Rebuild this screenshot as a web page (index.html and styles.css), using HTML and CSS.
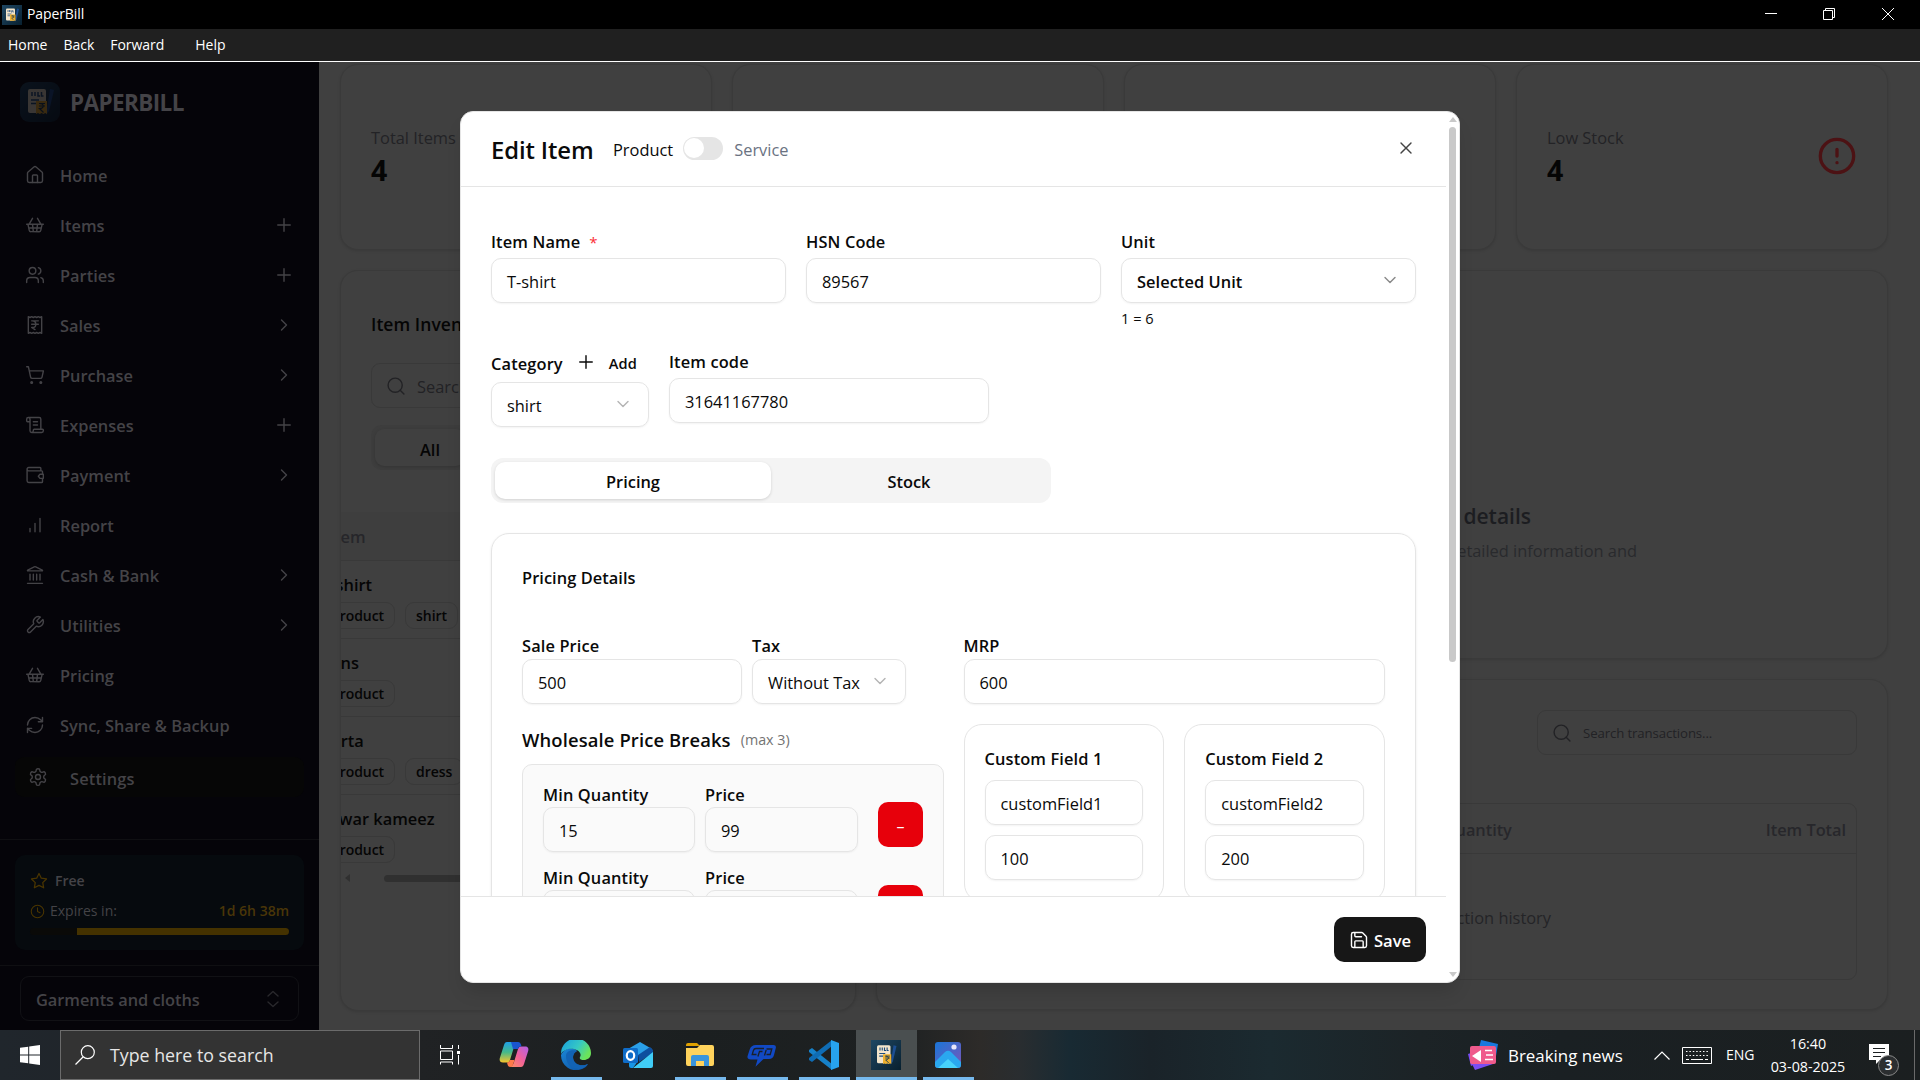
FILE: index.html
```html
<!DOCTYPE html>
<html lang="en">
<head>
<meta charset="utf-8">
<title>PaperBill</title>
<link rel="stylesheet" href="styles.css">
</head>
<body>
<svg class="defs" aria-hidden="true">
  <symbol id="house" viewBox="0 0 24 24"><path d="M15 21v-8a1 1 0 0 0-1-1h-4a1 1 0 0 0-1 1v8"/><path d="M3 10a2 2 0 0 1 .709-1.528l7-5.999a2 2 0 0 1 2.582 0l7 5.999A2 2 0 0 1 21 10v9a2 2 0 0 1-2 2H5a2 2 0 0 1-2-2z"/></symbol>
  <symbol id="basket" viewBox="0 0 24 24"><path d="m15 11-1 9M19 11l-4-7M2 11h20M3.5 11l1.6 7.4a2 2 0 0 0 2 1.6h9.8a2 2 0 0 0 2-1.6l1.7-7.4M4.5 15.5h15M5 11l4-7M9 11l1 9"/></symbol>
  <symbol id="users" viewBox="0 0 24 24"><path d="M16 21v-2a4 4 0 0 0-4-4H6a4 4 0 0 0-4 4v2M22 21v-2a4 4 0 0 0-3-3.87M16 3.13a4 4 0 0 1 0 7.75"/><circle cx="9" cy="7" r="4"/></symbol>
  <symbol id="receipt" viewBox="0 0 24 24"><path d="M4 2v20l2-1 2 1 2-1 2 1 2-1 2 1 2-1 2 1V2l-2 1-2-1-2 1-2-1-2 1-2-1-2 1ZM8 7h8M12 17.5 8 15h1a4 4 0 0 0 0-8M8 11h8"/></symbol>
  <symbol id="cart" viewBox="0 0 24 24"><circle cx="8" cy="21" r="1"/><circle cx="19" cy="21" r="1"/><path d="M2.05 2.05h2l2.66 12.42a2 2 0 0 0 2 1.58h9.78a2 2 0 0 0 1.95-1.57l1.65-7.43H5.12"/></symbol>
  <symbol id="scroll" viewBox="0 0 24 24"><path d="M15 12h-5M15 8h-5M19 17V5a2 2 0 0 0-2-2H4M8 21h12a2 2 0 0 0 2-2v-1a1 1 0 0 0-1-1H11a1 1 0 0 0-1 1v1a2 2 0 1 1-4 0V5a2 2 0 1 0-4 0v2a1 1 0 0 0 1 1h3"/></symbol>
  <symbol id="wallet" viewBox="0 0 24 24"><path d="M21 11V8a1 1 0 0 0-1-1H4M2.500 5v14a2 2 0 0 0 2 2H20a1 1 0 0 0 1-1v-4M2.500 5a2 2 0 0 1 2-2H18a1 1 0 0 1 1 1v3M2.500 5a2 2 0 0 0 2 2M22 11h-4l-2 2.500 2 2.500h4z"/></symbol>
  <symbol id="bars" viewBox="0 0 24 24"><path d="M6 20v-4M12 20V10M18 20V4"/></symbol>
  <symbol id="bank" viewBox="0 0 24 24"><path d="M10 18v-7M11.12 2.198a2 2 0 0 1 1.76.006l7.866 3.847c.476.233.31.949-.22.949H3.474c-.53 0-.695-.716-.22-.949zM14 18v-7M18 18v-7M3 22h18M6 18v-7"/></symbol>
  <symbol id="wrench" viewBox="0 0 24 24"><path d="M14.700 6.300a1 1 0 0 0 0 1.400l1.600 1.600a1 1 0 0 0 1.400 0l3.770-3.770a6 6 0 0 1-7.940 7.940l-6.910 6.910a2.120 2.120 0 0 1-3-3l6.910-6.910a6 6 0 0 1 7.940-7.940l-3.760 3.760z"/></symbol>
  <symbol id="refresh" viewBox="0 0 24 24"><path d="M3 12a9 9 0 0 1 9-9 9.750 9.750 0 0 1 6.740 2.740L21 8M21 3v5h-5M21 12a9 9 0 0 1-9 9 9.750 9.750 0 0 1-6.740-2.740L3 16M8 16H3v5"/></symbol>
  <symbol id="gear" viewBox="0 0 24 24"><path d="M12.220 2h-.44a2 2 0 0 0-2 2v.18a2 2 0 0 1-1 1.730l-.43.25a2 2 0 0 1-2 0l-.15-.08a2 2 0 0 0-2.730.73l-.22.38a2 2 0 0 0 .73 2.730l.15.1a2 2 0 0 1 1 1.720v.51a2 2 0 0 1-1 1.740l-.15.09a2 2 0 0 0-.73 2.730l.22.38a2 2 0 0 0 2.730.73l.15-.08a2 2 0 0 1 2 0l.43.25a2 2 0 0 1 1 1.730V20a2 2 0 0 0 2 2h.44a2 2 0 0 0 2-2v-.18a2 2 0 0 1 1-1.730l.43-.25a2 2 0 0 1 2 0l.15.08a2 2 0 0 0 2.730-.73l.22-.39a2 2 0 0 0-.73-2.730l-.15-.08a2 2 0 0 1-1-1.740v-.5a2 2 0 0 1 1-1.740l.15-.09a2 2 0 0 0 .73-2.730l-.22-.38a2 2 0 0 0-2.730-.73l-.15.08a2 2 0 0 1-2 0l-.43-.25a2 2 0 0 1-1-1.730V4a2 2 0 0 0-2-2z"/><circle cx="12" cy="12" r="3"/></symbol>
  <symbol id="star" viewBox="0 0 24 24"><path d="M12 2l3.090 6.260L22 9.270l-5 4.870 1.180 6.880L12 17.770l-6.180 3.250L7 14.140 2 9.270l6.910-1.010z"/></symbol>
  <symbol id="clock" viewBox="0 0 24 24"><circle cx="12" cy="12" r="10"/><path d="M12 6v6l4 2"/></symbol>
  <symbol id="plus" viewBox="0 0 24 24"><path d="M4.500 12h15M12 4.500v15"/></symbol>
  <symbol id="right" viewBox="0 0 24 24"><path d="m9 18 6-6-6-6"/></symbol>
  <symbol id="down" viewBox="0 0 24 24"><path d="m6 9 6 6 6-6"/></symbol>
  <symbol id="updown" viewBox="0 0 24 24"><path d="m6 15.500 6 5.500 6-5.500M6 8.500l6-5.500 6 5.500"/></symbol>
  <symbol id="search" viewBox="0 0 24 24"><circle cx="11" cy="11" r="8.500"/><path d="m21.500 21.500-4.500-4.500"/></symbol>
  <symbol id="close" viewBox="0 0 24 24"><path d="M18 6 6 18M6 6l12 12"/></symbol>
  <symbol id="alert" viewBox="0 0 24 24"><circle cx="12" cy="12" r="10"/><path d="M12 8v4M12 16h.01"/></symbol>
  <symbol id="save" viewBox="0 0 24 24"><path d="M15.200 3a2 2 0 0 1 1.400.6l3.800 3.800a2 2 0 0 1 .6 1.400V19a2 2 0 0 1-2 2H5a2 2 0 0 1-2-2V5a2 2 0 0 1 2-2zM17 21v-7a1 1 0 0 0-1-1H8a1 1 0 0 0-1 1v7M7 3v4a1 1 0 0 0 1 1h7"/></symbol>
  <linearGradient id="navy" x1="0" y1="0" x2="1" y2="1"><stop offset="0" stop-color="#1f4763"/><stop offset="1" stop-color="#08202f"/></linearGradient>
  <symbol id="bill" viewBox="0 0 40 40">
    <rect width="40" height="40" fill="url(#navy)"/>
    <path d="M30 7l4 1-5 21-3 4z" fill="#1c4f94"/>
    <rect x="8" y="7" width="18" height="24" rx="2" fill="#f3e5cb"/>
    <path d="M12 10v4M15 10v4M18 10v4h2M21.500 10v4h2M11 18h8M11 21.500h5" stroke="#1d4c7d" stroke-width="1.500" fill="none"/>
    <path d="M16 19h11v13l-1.800-1-1.800 1-1.800-1-1.800 1-1.800-1-2 1z" fill="#efb02c"/>
    <path d="M19 21.500h6M19 24h6M19.500 21.500c5 0 5 5 0 5l4 4" stroke="#173a58" stroke-width="1.200" fill="none"/>
  </symbol>
</svg>

<header class="titlebar">
  <svg class="title-logo"><use href="#bill"/></svg>
  <span>PaperBill</span>
  <div class="win-controls">
    <svg viewBox="0 0 12 12"><path d="M0 5.500h12"/></svg>
    <svg viewBox="0 0 12 12"><path d="M.5 2.500h9v9h-9zM2.500 2.500v-2h9v9h-2"/></svg>
    <svg viewBox="0 0 12 12"><path d="M0 0l12 12M12 0L0 12"/></svg>
  </div>
</header>
<nav class="menubar"><span>Home</span><span>Back</span><span>Forward</span><span class="help">Help</span></nav>

<div class="app">
  <aside class="sidebar">
    <div class="brand"><svg><use href="#bill"/></svg><span>PAPERBILL</span></div>
    <nav class="side-nav">
      <a><svg class="ic"><use href="#house"/></svg><span>Home</span></a>
      <a><svg class="ic"><use href="#basket"/></svg><span>Items</span><svg class="ic end"><use href="#plus"/></svg></a>
      <a><svg class="ic"><use href="#users"/></svg><span>Parties</span><svg class="ic end"><use href="#plus"/></svg></a>
      <a><svg class="ic"><use href="#receipt"/></svg><span>Sales</span><svg class="ic end"><use href="#right"/></svg></a>
      <a><svg class="ic"><use href="#cart"/></svg><span>Purchase</span><svg class="ic end"><use href="#right"/></svg></a>
      <a><svg class="ic"><use href="#scroll"/></svg><span>Expenses</span><svg class="ic end"><use href="#plus"/></svg></a>
      <a><svg class="ic"><use href="#wallet"/></svg><span>Payment</span><svg class="ic end"><use href="#right"/></svg></a>
      <a><svg class="ic"><use href="#bars"/></svg><span>Report</span></a>
      <a><svg class="ic"><use href="#bank"/></svg><span>Cash &amp; Bank</span><svg class="ic end"><use href="#right"/></svg></a>
      <a><svg class="ic"><use href="#wrench"/></svg><span>Utilities</span><svg class="ic end"><use href="#right"/></svg></a>
      <a><svg class="ic"><use href="#basket"/></svg><span>Pricing</span></a>
      <a><svg class="ic"><use href="#refresh"/></svg><span>Sync, Share &amp; Backup</span></a>
      <a class="current"><svg class="ic"><use href="#gear"/></svg><span>Settings</span></a>
    </nav>
    <div class="plan-wrap">
      <div class="plan">
        <div class="plan-name"><svg class="ic"><use href="#star"/></svg><span>Free</span></div>
        <div class="plan-time"><svg class="ic"><use href="#clock"/></svg><span>Expires in:</span><b>1d 6h 38m</b></div>
        <div class="meter"><i></i></div>
      </div>
    </div>
    <div class="org"><span>Garments and cloths</span><svg class="ic"><use href="#updown"/></svg></div>
  </aside>

  <main class="content">
    <section class="stats">
      <div class="card stat"><div><p>Total Items</p><strong>4</strong></div></div>
      <div class="card stat"></div>
      <div class="card stat"></div>
      <div class="card stat"><div><p>Low Stock</p><strong>4</strong></div><svg class="alert"><use href="#alert"/></svg></div>
    </section>
    <section class="panels">
      <div class="card inventory">
        <h2>Item Inventory</h2>
        <div class="search"><svg class="ic"><use href="#search"/></svg><span>Search</span></div>
        <div class="filter"><span>All</span></div>
        <div class="items">
          <div class="thead"><span class="cut-item">Item</span></div>
          <div class="row"><span class="cut-shirt">T-shirt</span><div class="tags"><em class="cut">product</em><em>shirt</em></div></div>
          <div class="row"><span class="cut-jeans">jeans</span><div class="tags"><em class="cut">product</em></div></div>
          <div class="row"><span class="cut-kurta">kurta</span><div class="tags"><em class="cut">product</em><em>dress</em></div></div>
          <div class="row last"><span class="cut-salwar">salwar kameez</span><div class="tags"><em class="cut">product</em></div></div>
          <div class="hscroll"><i></i><b></b></div>
        </div>
      </div>
      <div class="side-panels">
        <div class="card details"><h3>details</h3><p>detailed information and</p></div>
        <div class="card history">
          <div class="search small"><svg class="ic"><use href="#search"/></svg><span>Search transactions...</span></div>
          <div class="table">
            <div class="table-head"><span class="qty">Quantity</span><span>Item Total</span></div>
            <p>transaction history</p>
          </div>
        </div>
      </div>
    </section>
  </main>

  <section class="dialog">
    <div class="dialog-main">
      <header class="dialog-head">
        <h1>Edit Item</h1>
        <span class="type">Product</span><i class="switch"></i><span class="type off">Service</span>
        <svg class="ic close"><use href="#close"/></svg>
      </header>
      <div class="dialog-body">
        <div class="fields three">
          <div><label>Item Name <sup>*</sup></label><div class="input">T-shirt</div></div>
          <div><label>HSN Code</label><div class="input">89567</div></div>
          <div><label>Unit</label><div class="input select medium">Selected Unit<svg class="ic"><use href="#down"/></svg></div><small>1 = 6</small></div>
        </div>
        <div class="fields codes">
          <div class="category"><label>Category<svg class="ic"><use href="#plus"/></svg><span>Add</span></label><div class="input select pale">shirt<svg class="ic"><use href="#down"/></svg></div></div>
          <div class="code"><label>Item code</label><div class="input">31641167780</div></div>
        </div>
        <div class="tabs"><span class="on">Pricing</span><span>Stock</span></div>
        <div class="pricing">
          <h4>Pricing Details</h4>
          <div class="pricing-grid">
            <div>
              <div class="sale">
                <div><label>Sale Price</label><div class="input">500</div></div>
                <div><label>Tax</label><div class="input select pale">Without Tax<svg class="ic"><use href="#down"/></svg></div></div>
              </div>
              <h5>Wholesale Price Breaks <small>(max 3)</small></h5>
              <div class="breaks">
                <div class="break"><div><label>Min Quantity</label><div class="input">15</div></div><div><label>Price</label><div class="input">99</div></div><button>–</button></div>
                <div class="break"><div><label>Min Quantity</label><div class="input"></div></div><div><label>Price</label><div class="input"></div></div><button></button></div>
              </div>
            </div>
            <div>
              <label>MRP</label><div class="input">600</div>
              <div class="customs">
                <div class="custom"><label>Custom Field 1</label><div class="input">customField1</div><div class="input">100</div></div>
                <div class="custom"><label>Custom Field 2</label><div class="input">customField2</div><div class="input">200</div></div>
              </div>
            </div>
          </div>
        </div>
      </div>
      <footer class="dialog-foot"><button class="save"><svg class="ic"><use href="#save"/></svg><span>Save</span></button></footer>
    </div>
    <div class="vscroll"><i class="up"></i><b></b><i class="dn"></i></div>
  </section>
</div>

<footer class="taskbar">
  <div class="start"><svg viewBox="0 0 20 20"><path d="M0 2.800l8.200-1.100v7.800H0zM9.200 1.500L20 0v9.500H9.200zM0 10.500h8.200v7.800L0 17.200zM9.200 10.500H20V20L9.200 18.500z"/></svg></div>
  <div class="find"><svg viewBox="0 0 20 20"><circle cx="12.800" cy="7.200" r="6.500"/><path d="M8 12L.5 19.500"/></svg><span>Type here to search</span></div>
  <div class="taskview"><svg viewBox="0 0 20 20"><path d="M.5 0v3.500h12V0M.5 6h12v8.500H.5zM.5 19.500V17h12v2.500M18.500 0v4M18.500 10v9.500"/><path d="M17 6h3v3h-3z" class="dot"/></svg></div>
  <div class="task"><svg viewBox="0 0 30 30"><defs><linearGradient id="c1" x1="0" y1="0" x2="0" y2="1"><stop offset="0" stop-color="#1e9fe8"/><stop offset=".5" stop-color="#45b98a"/><stop offset="1" stop-color="#f6c52b"/></linearGradient><linearGradient id="c2" x1="1" y1="0" x2="0" y2="1"><stop offset="0" stop-color="#b060e8"/><stop offset=".5" stop-color="#f0609a"/><stop offset="1" stop-color="#ff9060"/></linearGradient></defs><path d="M8 2h11c-2 1-3 2-4 5l-4 13c-.8 2-1.500 2.500-3 2.500H4c-3 0-4-2-3-5L5 5c.6-2 1.500-3 3-3z" fill="url(#c1)"/><path d="M22 27H11c2-1 3-2 4-5l4-13c.8-2 1.500-2.500 3-2.500h4c3 0 4 2 3 5l-4 12.500c-.6 2-1.500 3-3 3z" fill="url(#c2)"/><path d="M12 2h7c2 0 3 2 3.500 4.500-2 0-3 .5-3.500 2.500h-5z" fill="#1a55cf"/><path d="M8 22.500c2 0 2.500-1 3-2.500h4.500l-.8 2.500c-.8 2.500-1.500 4.500-3.700 4.500-2 0-2.500-2.500-3-4.500z" fill="#ff7a4a"/></svg></div>
  <div class="task run"><svg viewBox="0 0 30 30"><defs><linearGradient id="e1" x1="0" y1="0" x2="1" y2=".5"><stop offset="0" stop-color="#169de0"/><stop offset=".6" stop-color="#36c8c4"/><stop offset="1" stop-color="#6be35a"/></linearGradient><linearGradient id="e2" x1="0" y1="0" x2="1" y2="1"><stop offset="0" stop-color="#1b87d8"/><stop offset="1" stop-color="#0d4f9e"/></linearGradient></defs><path d="M0 15a15 15 0 0 0 21 14c3-1 5-3 6-5-6 3-15 1-15-7 0-3 2-5 4-6-4-5-13-3-16 4z" fill="url(#e2)"/><path d="M0 14A15 15 0 0 1 30 13c0 5-4 7-7 7s-5-1-4-3c2-3-1-7-6-8C8 8 2 10 0 14z" fill="url(#e1)"/><path d="M5 16c0 8 6 14 14 13 3 0 6-3 8-5-6 3-15 1-15-7 0-3 2-5 4-6-5-2-11 0-11 5z" fill="#1263b5"/></svg></div>
  <div class="task"><svg viewBox="0 0 30 30"><path d="M5 9L17 2l12 7v6H5z" fill="#2a9fe8"/><path d="M15 15L27 7l3 3v3L16 22z" fill="#0d4f9f"/><path d="M30 12v14a2 2 0 0 1-2 2H10z" fill="#40cdf7"/><path d="M6 17l9 4-5 7H8a2 2 0 0 1-2-2z" fill="#1795e6"/><rect y="8" width="15" height="15" rx="1.500" fill="#0f6cc8"/><ellipse cx="7.500" cy="15.500" rx="3.700" ry="4.300" fill="none" stroke="#fff" stroke-width="2.200"/></svg></div>
  <div class="task run"><svg viewBox="0 0 30 30"><path d="M1 5a2 2 0 0 1 2-2h9l3 3H1z" fill="#e0a100"/><path d="M1 8h11l3-3h12a2 2 0 0 1 2 2v17a2 2 0 0 1-2 2H3a2 2 0 0 1-2-2z" fill="#ffd35c"/><path d="M6 26V17a2 2 0 0 1 2-2h14a2 2 0 0 1 2 2v9h-5v-5h-8v5z" fill="#3a95dc"/></svg></div>
  <div class="task run"><svg viewBox="0 0 30 30"><path d="M9 5h17.500q3 0 2.300 3L27 15q-1 4-5 4h-5.500L8.500 26.700l2-7.200H4q-4.300 0-3.400-3.500L2.700 9.500Q4 5 9 5z" fill="#1149c4"/><path d="M17 8.500H9q-2 0-2.600 2L5.200 14.500h4.300M15.500 11.500h-3l-1.600 5M19.500 9h5.300l-1.600 5.500h-3.700M17.500 15.500l1.700-5.500" fill="none" stroke="#1b2028" stroke-width="1.300"/></svg></div>
  <div class="task run"><svg viewBox="0 0 30 30"><path d="M0 10l3-2 20 16v6L0 12z" fill="#1681c9"/><path d="M0 20l3 2L23 6V0L0 18z" fill="#0f6cb4"/><path d="M22 0l8 3v24l-8 3z" fill="#27a3ee"/></svg></div>
  <div class="task run active"><svg><use href="#bill"/></svg></div>
  <div class="task run"><svg viewBox="0 0 30 30"><defs><linearGradient id="p1" x1="0" y1="0" x2="1" y2="1"><stop offset="0" stop-color="#1976d8"/><stop offset="1" stop-color="#7b55b8"/></linearGradient></defs><rect x="2" y="2" width="26" height="26" rx="3" fill="url(#p1)"/><path d="M2 22l10-10q3-2.500 6 0l10 10v3a3 3 0 0 1-3 3H5a3 3 0 0 1-3-3z" fill="#2aa8ef"/><path d="M5 28l10-9 10 9z" fill="#47d3fb"/><circle cx="21" cy="7" r="2.600" fill="#e8e6fb"/></svg></div>
  <div class="tray">
    <svg class="news" viewBox="0 0 30 30"><path d="M13 0l17 4-2 12H9z" fill="#1878de"/><path d="M0 14l3-1 2 12-2 1zM4 24h21l-18 6z" fill="#7a4df3"/><rect x="2" y="6" width="26" height="18" rx="2" fill="#ef5a8c"/><path d="M4 16l9-6v12z" fill="#fff"/><path d="M17 10.500h7M18 15h7M17 19.500h8" fill="none" stroke="#fff" stroke-width="1.300"/></svg>
    <span class="news-text">Breaking news</span>
    <svg class="caret" viewBox="0 0 16 9"><path d="M.5 8.500L8 1l7.500 7.500"/></svg>
    <svg class="kbd" viewBox="0 0 30 17"><path d="M.5.5h29v16H.5z"/><path d="M4 4.500h22M4 8.500h22" stroke-dasharray="1.500 1.900"/><path d="M4 12.500h3M9 12.500h12M23 12.500h3"/></svg>
    <span class="lang">ENG</span>
    <div class="clock"><span>16:40</span><span>03-08-2025</span></div>
    <div class="notif"><svg viewBox="0 0 20 20"><path d="M0 0h20v16h-9l-4 4v-4H0z" fill="#fff"/><path d="M4 4.500h12M4 8.500h12M4 12.500h8" stroke="#1c2022" stroke-width="1.200"/></svg><b>3</b></div>
  </div>
</footer>
</body>
</html>
```
FILE: styles.css
```css
* { box-sizing: border-box; margin: 0; padding: 0; }
body {
  width: 1920px; height: 1080px; overflow: hidden;
  display: flex; flex-direction: column;
  font-family: "Open Sans", "Noto Sans", sans-serif;
  font-size: 16.4px; line-height: 22px; color: #0a0a0a; background: #000;
  white-space: nowrap;
}
.defs { position: absolute; width: 0; height: 0; }
.ic { width: 20px; height: 20px; flex: none; fill: none; stroke: currentColor; stroke-width: 1.7; stroke-linecap: round; stroke-linejoin: round; }
label { display: flex; height: 22px; font-weight: 600; font-size: 16.4px; letter-spacing: .12px; }

/* window chrome */
.titlebar { height: 29px; display: flex; align-items: center; gap: 5px; padding-left: 2px; background: #000; color: #fff; font-size: 14px; }
.titlebar span { padding-bottom: 1px; letter-spacing: -.1px; }
.title-logo { width: 20px; height: 20px; }
.win-controls { display: flex; gap: 47px; margin-left: auto; padding: 0 26px 1px 0; }
.win-controls svg { width: 12px; height: 12px; fill: none; stroke: #fff; }
.win-controls svg:first-child { margin-right: -1px; }
.menubar { height: 33px; display: flex; align-items: center; gap: 16px; padding: 0 8px; background: #202020; border-bottom: 1px solid #fff; color: #fff; font-size: 14px; letter-spacing: -.03px; }
.menubar .help { margin-left: 15px; }

/* app */
.app { position: relative; height: 968px; display: flex; background: #404040; }
.sidebar { width: 319px; background: #050409; color: #444347; display: flex; flex-direction: column; }
.brand { height: 88px; padding: 20px 20px 0; display: flex; gap: 10px; font-size: 22.5px; font-weight: 700; line-height: 42px; }
.brand svg { width: 40px; height: 40px; border-radius: 9px; opacity: .22; }
.brand span { letter-spacing: -.6px; }
.side-nav { height: 689px; font-weight: 600; }
.side-nav a { height: 50px; display: flex; align-items: center; gap: 15px; padding: 0 25px; }
.side-nav span { padding-top: 2px; }
.side-nav .end { margin-left: auto; }
.side-nav a.current { height: 40px; margin: 7px 15px 0; padding: 0 13px; gap: 22px; background: #060606; border-radius: 9px; letter-spacing: .15px; }
.side-nav .current span { padding-top: 4px; }
.plan-wrap { border-top: 1px solid #0f0f12; border-bottom: 1px solid #0f0f12; padding: 15px; height: 127px; }
.plan { height: 95px; border-radius: 10px; background: #060a0e; padding: 15px; font-size: 14px; }
.plan-name, .plan-time { display: flex; align-items: center; height: 22px; }
.plan-name { font-weight: 600; gap: 7px; }
.plan-time { margin-top: 8px; gap: 5px; }
.plan svg { width: 18px; height: 18px; color: #4a3500; }
.plan-time svg { width: 15px; height: 15px; }
.plan-time b { margin-left: auto; font-weight: 600; color: #4a3608; }
.meter { height: 7px; margin-top: 6px; border-radius: 4px; background: #0a0a08; overflow: hidden; }
.meter i { display: block; height: 7px; margin-left: 47px; background: #443200; }
.org { margin: 10px 20px 0; height: 45px; border: 1px solid #111115; border-radius: 9px; display: flex; align-items: center; justify-content: space-between; padding: 0 15px; font-weight: 600; letter-spacing: -.05px; }
.org span { padding-top: 2px; }
.org .ic { color: #29282c; }

.content { flex: 1; padding: 2px 32px 0 21px; overflow: hidden; color: #050505; }
.card { border: 1px solid #3a3a3a; border-radius: 18px; background: #404040; box-shadow: 0 1px 3px rgba(0,0,0,.12); }
.stats { display: grid; grid-template-columns: repeat(4, 1fr); gap: 20px; height: 186px; }
.stat { display: flex; justify-content: space-between; align-items: center; padding: 0 30px; }
.stat div { padding-top: 5px; }
.stat p { color: #232326; }
.stat strong { display: block; font-size: 28.5px; line-height: 42px; margin-bottom: 2px; }
.alert { width: 40px; height: 40px; margin-top: -2px; color: #4c1214; fill: none; stroke: currentColor; stroke-width: 2; stroke-linecap: round; }
.panels { display: grid; grid-template-columns: 515.5px 1fr; gap: 20px; margin-top: 20px; height: 741px; }
.inventory { padding: 41px 0 0 30px; overflow: hidden; }
.inventory h2 { font-size: 17.5px; font-weight: 600; line-height: 24px; letter-spacing: .05px; }
.search { height: 45px; border: 1px solid #393939; border-radius: 9px; width: 455px; margin-top: 27px; padding: 0 14px; display: flex; align-items: center; gap: 11px; color: #222225; }
.search span { padding-top: 2px; }
.filter { width: 455px; height: 45px; margin-top: 17px; padding: 4px; border-radius: 11px; background: #3d3d3d; font-weight: 600; }
.filter span { display: block; width: 90px; height: 37px; padding-left: 45px; line-height: 41px; background: #404040; border-radius: 9px; box-shadow: 0 1px 3px rgba(0,0,0,.15); }
.items { margin: 42px 0 0 -30px; }
.thead { height: 49px; border-bottom: 1px solid #393939; line-height: 50px; background: #3e3e3e; color: #26262a; font-weight: 600; }
.items span { display: block; font-weight: 600; }
.cut-item { margin-left: -12px; }
.cut-shirt { margin-left: -20px; }
.cut-jeans { margin-left: -24px; }
.cut-kurta { margin-left: -20px; }
.cut-salwar { margin-left: -24px; }
.row { height: 78px; border-bottom: 1px solid #393939; padding-top: 13px; }
.row.last { border: 0; }
.tags { display: flex; gap: 10px; margin-top: 6px; }
.tags em { font-style: normal; font-weight: 600; font-size: 14px; line-height: 25px; height: 27px; padding: 0 10px; border: 1px solid #393939; border-radius: 9px; letter-spacing: -.05px; }
.tags .cut { margin-left: -21px; }
.hscroll { display: flex; align-items: center; gap: 34px; height: 10px; padding-left: 4px; }
.hscroll i { border: 4px solid transparent; border-right: 5px solid #303030; border-left: 0; }
.hscroll b { width: 300px; height: 7px; border-radius: 4px; background: #303030; }
.side-panels { display: grid; grid-template-rows: 389px 331px; gap: 20px; }
.details { padding: 233px 250px 0 0; text-align: right; }
.details h3 { font-size: 21px; font-weight: 600; line-height: 24px; padding-right: 106px; color: #1c1d21; }
.details p { margin-top: 12px; color: #292a2d; }
.history { padding: 30px 30px 0; }
.search.small { margin: 0 0 0 auto; width: 320px; font-size: 13.2px; }
.search.small span { padding-top: 0; letter-spacing: -.1px; }
.table { margin-top: 48px; height: 177px; border: 1px solid #393939; border-radius: 9px; }
.table-head { height: 50px; border-bottom: 1px solid #393939; display: flex; justify-content: flex-end; align-items: center; padding: 2px 10px 0 0; font-weight: 600; letter-spacing: -.05px; color: #27272b; }
.table-head .qty { margin-right: 254px; }
.table p { padding: 53px 305px 0 0; text-align: right; color: #242427; }

/* dialog */
.dialog { position: absolute; left: 460px; top: 49px; width: 1000px; height: 872px; border: 1px solid #e5e5e5; border-radius: 13px; background: #fff; box-shadow: 0 12px 18px -4px rgba(0,0,0,.14); display: flex; overflow: hidden; }
.dialog-main { width: 985px; display: flex; flex-direction: column; }
.dialog-head { height: 75px; border-bottom: 1px solid #e5e5e5; display: flex; align-items: center; padding: 0 30px; }
.dialog-head h1 { font-size: 23.8px; font-weight: 600; width: 122px; padding-top: 1px; letter-spacing: -.1px; }
.type { padding-top: 2px; }
.switch { width: 40px; height: 23px; margin: -1px 11px 0 10px; border-radius: 12px; background: #e5e5e5; padding: 1px; }
.switch::before { content: ""; display: block; width: 20px; height: 20px; border-radius: 50%; background: #fff; }
.type.off { color: #6a7282; }
.close { margin: -2px 0 0 auto; color: #444; }
.dialog-body { height: 709px; padding: 44px 30px 0; overflow: hidden; }
.input { height: 45px; border: 1px solid #e5e5e5; border-radius: 10px; padding: 2px 15px 0; line-height: 42px; box-shadow: 0 1px 2px rgba(0,0,0,.05); }
.fields > div .input { margin-top: 5px; }
.fields small { display: block; font-size: 14.6px; margin-top: 4px; }
.select { display: flex; justify-content: space-between; align-items: center; }
.select .ic { color: #8a8a8a; margin: -4px 0 0; }
.select.pale .ic { color: #b5b5b5; }
.medium { font-weight: 600; letter-spacing: .05px; }
.three { display: grid; grid-template-columns: repeat(3, 1fr); gap: 20px; height: 120px; }
label sup { margin: 0 0 0 9px; color: #fb2c36; font-size: 15px; font-weight: 400; }
.codes { display: flex; gap: 20px; height: 107px; }
.category { width: 158px; padding-top: 2px; }
.category label svg { margin: -1px 13px 0 13px; }
.category label span { font-size: 14.6px; font-weight: 600; line-height: 21px; }
.fields .category .input { margin-top: 7px; }
.code { width: 320px; }
.tabs { width: 560px; height: 45px; padding: 4px; border-radius: 12px; background: #f4f4f4; display: grid; grid-template-columns: 1fr 1fr; text-align: center; font-weight: 600; line-height: 40px; }
.tabs .on { height: 37px; background: #fff; border-radius: 10px; box-shadow: 0 1px 3px rgba(0,0,0,.15); }
.pricing { height: 600px; margin-top: 30px; border: 1px solid #e5e5e5; border-radius: 18px; padding: 33px 30px 0; box-shadow: 0 1px 3px rgba(0,0,0,.08); }
.pricing h4 { height: 67px; font-size: 16.4px; font-weight: 600; letter-spacing: .06px; }
.pricing-grid { display: grid; grid-template-columns: 1fr 1fr; gap: 20px; }
.pricing-grid label { height: 25px; line-height: 24px; }
.sale { display: grid; grid-template-columns: 220px 154px; gap: 10px; }
.pricing h5 { font-size: 18.4px; font-weight: 600; line-height: 24px; letter-spacing: .13px; margin: 24px 0 12px; display: flex; gap: 10px; }
.pricing h5 small { font-size: 14.3px; font-weight: 400; letter-spacing: 0; color: #737373; }
.breaks { height: 200px; border: 1px solid #e5e5e5; border-radius: 10px; background: #fafafa; padding: 18px 20px 0; }
.break { display: grid; grid-template-columns: 152px 153px 45px; column-gap: 10px; height: 83px; }
.break label { height: 24px; line-height: 23px; }
.break button { width: 45px; height: 45px; margin: 19px 0 0 10px; border: 0; border-radius: 10px; background: #e7000b; color: #fff; font: 16px/48px "Open Sans", sans-serif; }
.customs { display: grid; grid-template-columns: 1fr 1fr; gap: 20px; margin-top: 20px; }
.custom { height: 178px; border: 1px solid #e5e5e5; border-radius: 18px; padding: 22px 20px 0; }
.custom label { height: 33px; line-height: 23px; }
.custom .input + .input { margin-top: 10px; }
.dialog-foot { border-top: 1px solid #e5e5e5; padding: 20px; display: flex; justify-content: flex-end; }
.save { width: 92px; height: 45px; border: 0; border-radius: 10px; background: #171717; color: #fff; display: flex; align-items: center; gap: 5px; padding: 0 15px; font: 600 16.6px "Open Sans", sans-serif; }
.save span { padding-top: 1px; }
.vscroll { display: flex; flex-direction: column; align-items: center; width: 13px; margin-left: 0; }
.vscroll b { width: 7px; height: 535px; margin-top: 5px; border-radius: 4px; background: #c9c9c9; }
.vscroll i { border: 4.5px solid transparent; }
.vscroll .up { border-top: 0; border-bottom: 5px solid #c9c9c9; margin-top: 5px; }
.vscroll .dn { border-bottom: 0; border-top: 5px solid #c9c9c9; margin: auto 0 5px; }

/* taskbar */
.taskbar { height: 50px; display: flex; color: #fff; background: linear-gradient(90deg, #20262c 0, #202224 420px, #1b1f20 700px, #1e2122 900px, #2d2b29 980px, #292d30 1020px, #182a33 1070px, #1a2329 1150px, #1b2a30 1270px, #1c2326 1420px, #1a2023 1560px, #1b1f20 1920px); }
.start { width: 60px; display: grid; place-items: center; }
.start svg { width: 20px; height: 20px; fill: #fff; }
.find { width: 360px; height: 50px; border: 1px solid #6b6b6b; background: #333; display: flex; align-items: center; gap: 15px; padding-left: 14px; font-size: 17.8px; color: #e6e6e6; }
.find svg { width: 20px; height: 20px; fill: none; stroke: #fff; stroke-width: 1.2; }
.taskview { width: 63px; padding: 15px 0 0 20px; }
.taskview svg { width: 20px; height: 20px; fill: none; stroke: #fff; }
.taskview .dot { fill: #fff; stroke: none; }
.task { width: 51px; margin: 0 5.5px; height: 50px; display: flex; justify-content: center; padding-top: 10px; }
.task svg { width: 30px; height: 30px; }
.run { border-bottom: 3px solid #76b9ed; }
.active { width: 61px; margin: 0 .5px; background: #4a4f50; }
.tray { margin-left: auto; display: flex; align-items: center; font-size: 14px; }
.tray svg { flex: none; }
.news { width: 30px; height: 30px; }
.news-text { width: 114px; margin: 1px 32px 0 10px; font-size: 16.9px; }
.caret { width: 16px; height: 9px; fill: none; stroke: #fff; stroke-width: 1.2; }
.kbd { width: 30px; height: 17px; margin: 1px 14px 0 12px; fill: none; stroke: #fff; }
.lang { width: 28px; }
.clock { width: 76px; margin: 0 23px 0 16px; display: flex; flex-direction: column; align-items: center; line-height: 23px; font-size: 14.3px; }
.notif { position: relative; width: 46px; height: 50px; padding-top: 14px; border-right: 1px solid #6a6a6a; margin-right: 5px; }
.notif svg { width: 20px; height: 20px; }
.notif b { position: absolute; left: 9px; top: 25px; width: 21px; height: 21px; border: 1px solid #8a8a8a; border-radius: 50%; background: #2b2e30; font-size: 13.500px; line-height: 19px; text-align: center; font-weight: 600; }
```
